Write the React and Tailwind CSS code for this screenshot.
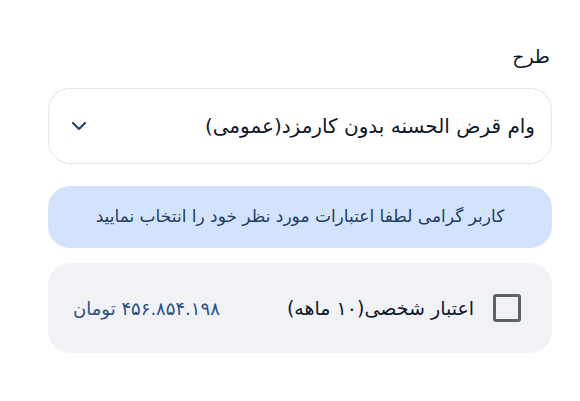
import { useState } from "react";

const App = () => {
  const [checked, setChecked] = useState(false);

  return (
    <div
      dir="rtl"
      className="w-[580px] h-[401px] bg-white pl-12 pr-7 pt-[42px]"
      style={{ fontFamily: '"DejaVu Sans", "Noto Sans", sans-serif' }}
    >
      {/* Label */}
      <div className="text-[19px] leading-[28px] text-gray-900 pr-0.5">طرح</div>

      {/* Select */}
      <div className="mt-[18px] h-[76px] rounded-[22px] border border-gray-200 flex items-center justify-between pr-4 pl-[22px]">
        <span className="text-[20px] text-gray-900">وام قرض الحسنه بدون کارمزد(عمومی)</span>
        <svg width="16" height="10" viewBox="0 0 16 10" fill="none">
          <path d="M2 2l6 6 6-6" stroke="#2d4a73" strokeWidth="2.4" strokeLinecap="round" strokeLinejoin="round" />
        </svg>
      </div>

      {/* Info */}
      <div className="mt-[22px] h-[62px] rounded-[22px] bg-[#d3e3fd] flex items-center justify-center">
        <span className="text-[17px] text-[#223c63]">کاربر گرامی لطفا اعتبارات مورد نظر خود را انتخاب نمایید</span>
      </div>

      {/* Credit row */}
      <div className="mt-[15px] h-[90px] rounded-[22px] bg-[#f0f2f6] flex items-center justify-between pr-[31px] pl-[25px]">
        <label className="flex items-center gap-[19px] cursor-pointer">
          <span
            onClick={() => setChecked(!checked)}
            className="w-[28px] h-[28px] rounded-[3px] border-[3px] border-[#5f6368] bg-transparent"
          />
          <span className="text-[19px] text-gray-900">اعتبار شخصی(۱۰ ماهه)</span>
        </label>
        <span className="text-[18px] text-[#2b4f86]">۴۵۶.۸۵۴.۱۹۸ تومان</span>
      </div>
    </div>
  );
};

export default App;
